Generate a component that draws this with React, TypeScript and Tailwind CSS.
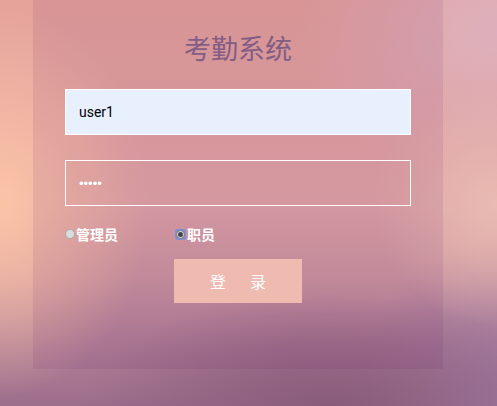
import { useState } from "react";

export default function App() {
  const [role, setRole] = useState<"admin" | "staff">("staff");
  const [user, setUser] = useState("user1");
  const [pwd, setPwd] = useState("12345");

  return (
    <div
      className="relative h-[406px] w-full overflow-hidden bg-[radial-gradient(ellipse_30%_48%_at_0%_50%,#fcc4a6_0%,rgba(252,196,166,0)_100%),radial-gradient(ellipse_40%_35%_at_100%_8%,#ddb0bd_0%,rgba(221,176,189,0)_100%),radial-gradient(ellipse_25%_30%_at_100%_50%,#e8bab2_0%,rgba(232,186,178,0)_100%),radial-gradient(ellipse_50%_28%_at_66%_100%,#8a5c7b_0%,rgba(138,92,123,0)_100%),radial-gradient(ellipse_30%_40%_at_100%_100%,#9e78a0_0%,rgba(158,120,160,0)_100%),linear-gradient(180deg,#e6a39a_0%,#e0a6a6_50%,#cc97a0_68%,#b07f96_85%,#9d6e8c_100%)]"
      style={{ fontFamily: '"Noto Sans CJK SC", "Noto Sans", sans-serif' }}
    >
      <div className="ml-[33px] flex h-[369px] w-[410px] flex-col bg-[rgba(110,30,110,0.1)]">
        <h1 className="mt-[30px] text-center text-[27px] leading-[36px] font-normal text-[#835d84]">考勤系统</h1>

        <input
          value={user}
          onChange={(e) => setUser(e.target.value)}
          className="mx-auto mt-[23px] h-[46px] w-[346px] border border-white bg-[#e8f0fe] px-[13px] text-[14px] text-black outline-none"
          style={{ fontFamily: "Roboto, Arial, sans-serif" }}
        />
        <input
          type="password"
          value={pwd}
          onChange={(e) => setPwd(e.target.value)}
          className="mx-auto mt-[25px] h-[46px] w-[346px] border border-white bg-transparent px-[13px] text-[13px] text-white outline-none"
          style={{ fontFamily: '"Liberation Sans", Arial, sans-serif' }}
        />

        <div className="mx-auto mt-[20px] flex h-[16px] w-[346px] items-center text-[14px] font-bold text-white">
          <label className="flex w-[110px] cursor-pointer items-center" onClick={() => setRole("admin")}>
            {role === "admin" ? (
              <span className="flex h-[11px] w-[11px] items-center justify-center rounded-[3px] bg-[#7d8fd6]">
                <span className="flex h-[9px] w-[9px] items-center justify-center rounded-full border border-[#777] bg-[#d8d8d8]">
                  <span className="h-[5px] w-[5px] rounded-full bg-[#444]" />
                </span>
              </span>
            ) : (
              <span className="h-[10px] w-[10px] rounded-full border border-[#aaa] bg-[#dcdcdc]" />
            )}
            <span className="ml-[1px] leading-[16px]">管理员</span>
          </label>
          <label className="flex cursor-pointer items-center" onClick={() => setRole("staff")}>
            {role === "staff" ? (
              <span className="flex h-[11px] w-[11px] items-center justify-center rounded-[3px] bg-[#7d8fd6]">
                <span className="flex h-[9px] w-[9px] items-center justify-center rounded-full border border-[#777] bg-[#d8d8d8]">
                  <span className="h-[5px] w-[5px] rounded-full bg-[#444]" />
                </span>
              </span>
            ) : (
              <span className="h-[10px] w-[10px] rounded-full border border-[#aaa] bg-[#dcdcdc]" />
            )}
            <span className="ml-[1px] leading-[16px]">职员</span>
          </label>
        </div>

        <button
          type="button"
          className="mx-auto mt-[17px] flex h-[44px] w-[128px] items-center justify-center gap-[24px] bg-[#efbbb1] text-[16px] text-white"
        >
          <span>登</span>
          <span>录</span>
        </button>
      </div>
    </div>
  );
}
